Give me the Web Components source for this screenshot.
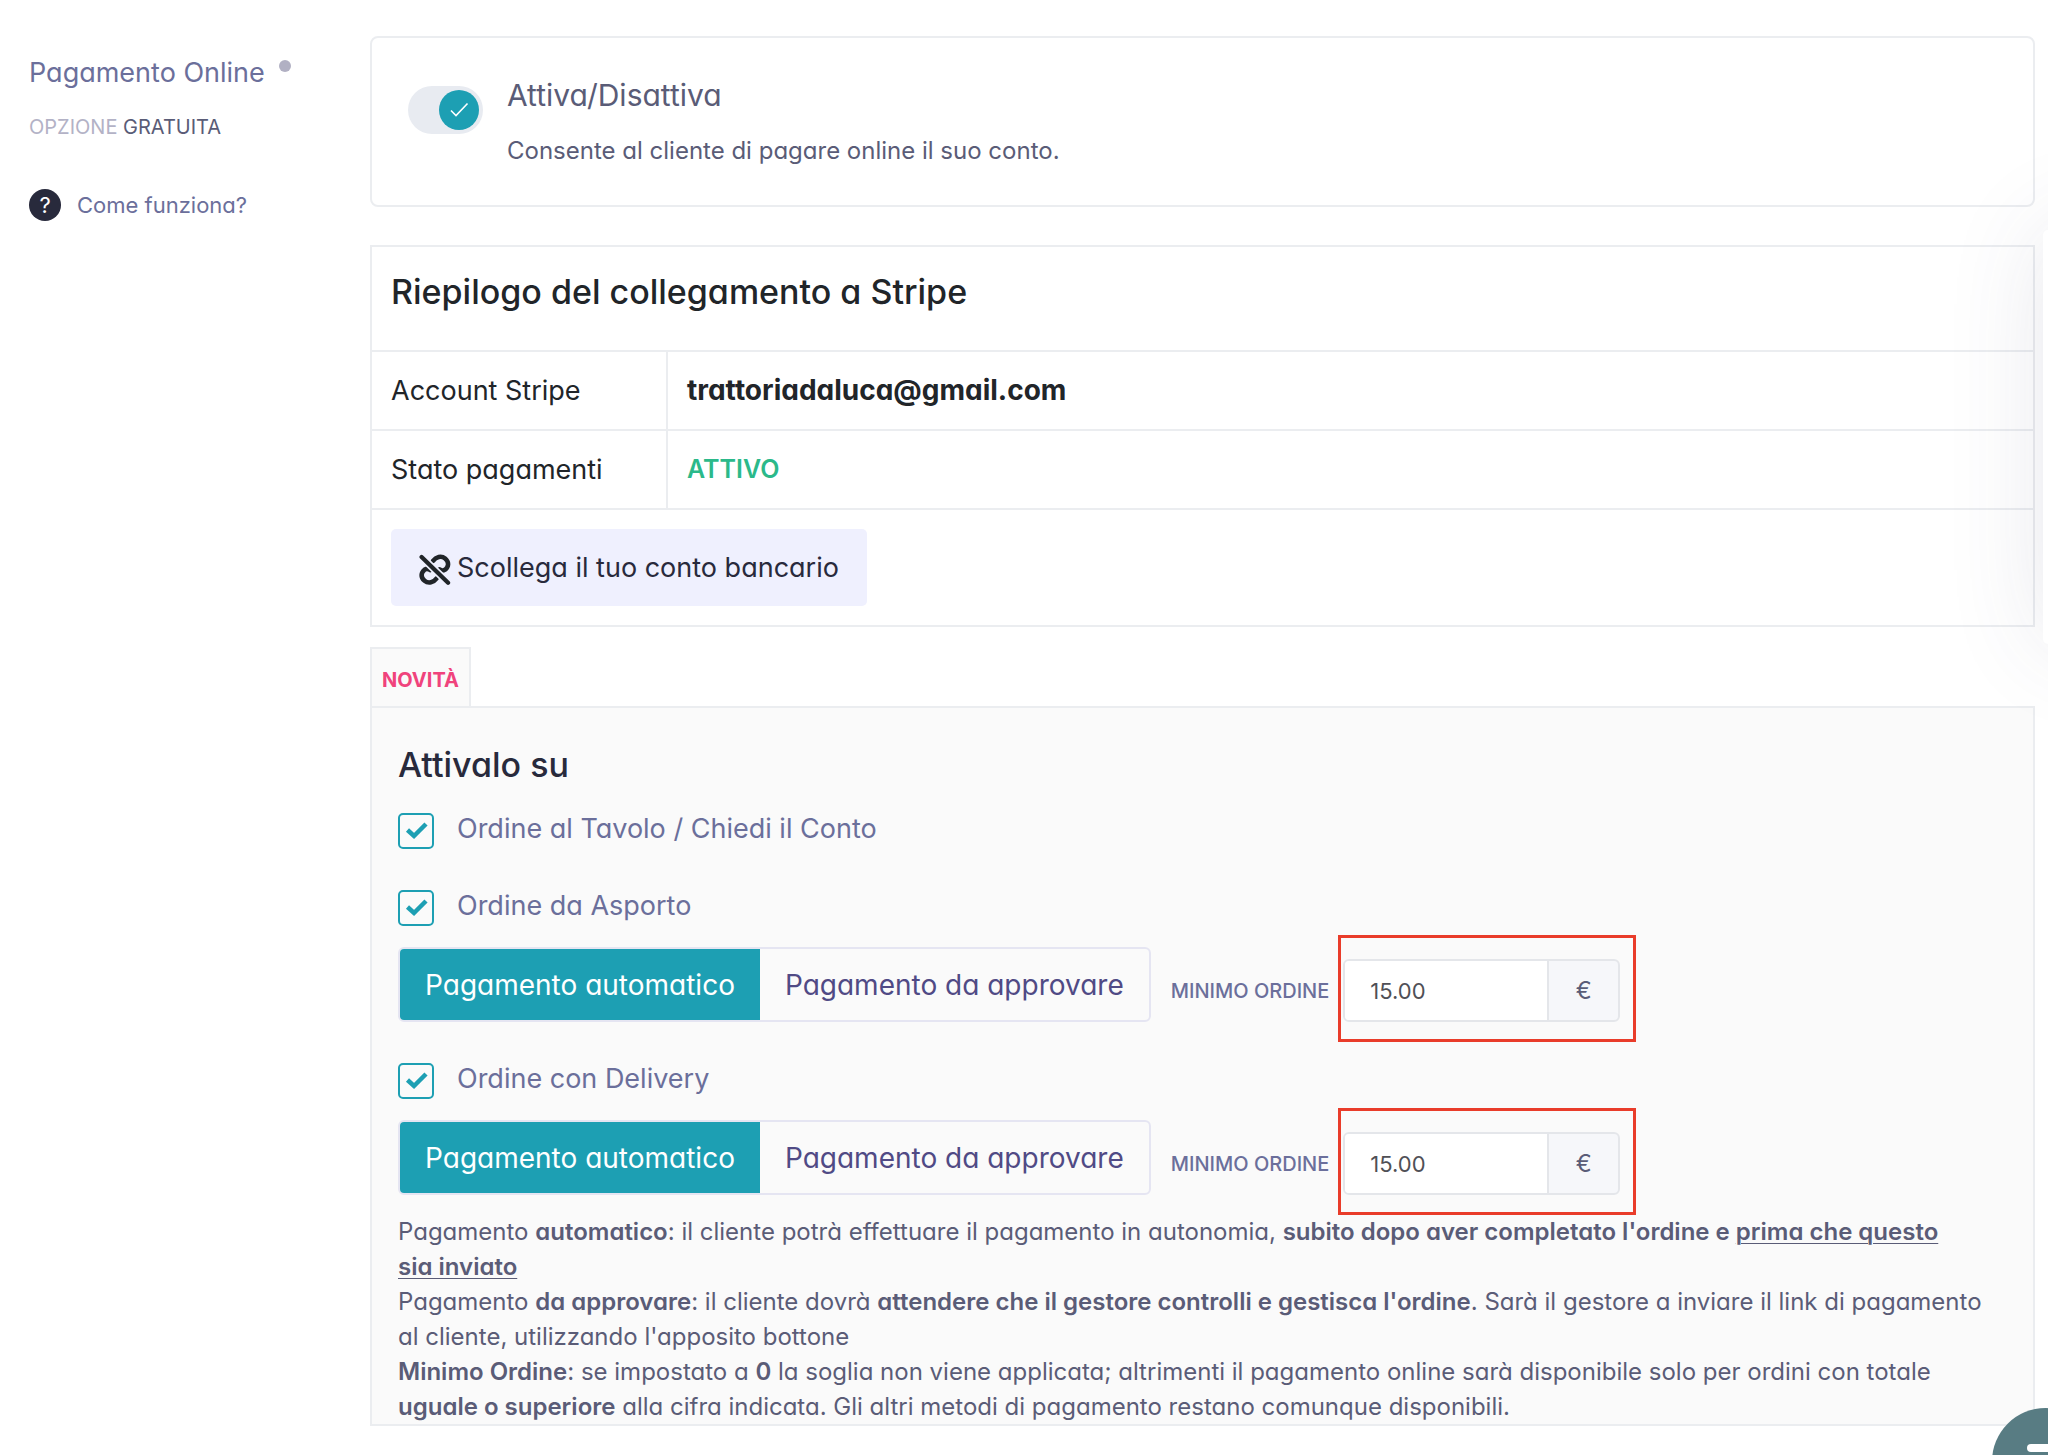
<!DOCTYPE html>
<html lang="it">
<head>
<meta charset="utf-8">
<meta name="viewport" content="width=device-width, initial-scale=1">
<title>Pagamento Online</title>
<style>
    :root {
        --accent: #1d9fb3;
        --line: #ebedf0;
        --muted: #6b6f9b;
        --text: #5a5c77;
        --dark: #282a3c;
        --panel: #fafafa;
    }

    body {
        margin: 0;
        background: #fff;
        color: var(--text);
        font-family: Inter, "Open Sans", sans-serif;
        font-feature-settings: "cv11";
        font-size: 24px;
        overflow-x: hidden;
    }
</style>
</head>
<body>

<settings-page>
    <option-summary slot="side" name="Pagamento Online" price="Gratuita"></option-summary>

    <switch-card caption="Attiva/Disattiva">Consente al cliente di pagare online il suo conto.</switch-card>

    <stripe-account email="trattoriadaluca@gmail.com" status="Attivo"></stripe-account>

    <news-panel tag="Novità" caption="Attivalo su">
        <order-option caption="Ordine al Tavolo / Chiedi il Conto"></order-option>
        <order-option caption="Ordine da Asporto">
            <payment-mode></payment-mode>
            <minimum-order value="15.00"></minimum-order>
        </order-option>
        <order-option caption="Ordine con Delivery">
            <payment-mode></payment-mode>
            <minimum-order value="15.00"></minimum-order>
        </order-option>
        <payment-notes></payment-notes>
    </news-panel>
</settings-page>

<side-drawer></side-drawer>
<chat-button></chat-button>

<script>
class SettingsPage extends HTMLElement {
    constructor() {
        super();
        this.attachShadow({mode: "open"});
    }

    connectedCallback() {
        this.shadowRoot.innerHTML = `
            <style>
            :host {
                display: grid;
                grid-template-columns: 341px minmax(0, 1fr);
                padding: 36px 13px 30px 29px;
            }

            main {
                display: flex;
                flex-direction: column;
            }
            </style>

            <aside><slot name="side"></slot></aside>
            <main><slot></slot></main>
        `;
    }
}


class OptionSummary extends HTMLElement {
    constructor() {
        super();
        this.attachShadow({mode: "open"});
    }

    connectedCallback() {
        this.shadowRoot.innerHTML = `
            <style>
            :host {
                display: block;
                padding-top: 17px;
                color: var(--muted);
            }

            h1 {
                display: flex;
                gap: 14px;
                margin: 0;
                font-size: 27px;
                font-weight: 400;
                line-height: 40px;
            }

            .dot {
                width: 12px;
                height: 12px;
                margin-top: 7px;
                border-radius: 50%;
                background: #b1b0c3;
            }

            p {
                margin: 19px 0 47px;
                color: #b3b2c6;
                font-size: 20px;
                line-height: 30px;
                text-transform: uppercase;
            }

            b {
                color: var(--text);
                font-weight: 400;
            }

            a {
                display: flex;
                align-items: center;
                gap: 16px;
                color: inherit;
                font-size: 22px;
                line-height: 32px;
                text-decoration: none;
            }

            .mark {
                width: 32px;
                border-radius: 50%;
                background: var(--dark);
                color: #fff;
                text-align: center;
            }
            </style>

            <h1>${this.getAttribute("name")}<span class="dot"></span></h1>
            <p>Opzione <b>${this.getAttribute("price")}</b></p>
            <a href="#come-funziona"><span class="mark">?</span>Come funziona?</a>
        `;
    }
}


class SwitchCard extends HTMLElement {
    constructor() {
        super();
        this.attachShadow({mode: "open"});
    }

    connectedCallback() {
        this.shadowRoot.innerHTML = `
            <style>
            :host {
                display: flex;
                align-items: flex-start;
                gap: 24px;
                padding: 36px;
                border: 2px solid var(--line);
                border-radius: 8px;
            }

            .switch {
                display: grid;
                margin-top: 12px;
            }

            input, svg {
                grid-area: 1 / 1;
            }

            input {
                appearance: none;
                width: 75px;
                height: 48px;
                margin: 0;
                border-radius: 24px;
                background: #e8ebf1;
            }

            svg {
                justify-self: end;
                align-self: center;
                margin-right: 4px;
                pointer-events: none;
            }

            input:not(:checked) + svg {
                justify-self: start;
                margin-left: 4px;
            }

            label {
                display: block;
                margin-bottom: 17px;
                font-size: 30px;
                line-height: 42px;
            }

            p {
                margin: 0;
                line-height: 36px;
            }
            </style>

            <span class="switch">
                <input id="active" type="checkbox" role="switch" checked>
                <svg width="40" height="40" viewBox="0 0 40 40" fill="none">
                    <circle cx="20" cy="20" r="20" fill="#1d9fb3"/>
                    <path d="M12 20.500l5 5L28.500 13.500" stroke="#fff" stroke-width="1.600"/>
                </svg>
            </span>
            <div>
                <label for="active">${this.getAttribute("caption")}</label>
                <p><slot></slot></p>
            </div>
        `;
    }
}


class StripeAccount extends HTMLElement {
    constructor() {
        super();
        this.attachShadow({mode: "open"});
    }

    connectedCallback() {
        this.shadowRoot.innerHTML = `
            <style>
            :host {
                display: block;
                margin: 38px 0 20px;
                color: #212529;
            }

            table {
                width: 100%;
                border-collapse: collapse;
                font-size: 27px;
                line-height: 39px;
            }

            th, td {
                padding: 19px;
                border: 2px solid var(--line);
                font-weight: 400;
                text-align: left;
            }

            tbody th {
                width: 256px;
            }

            thead th {
                padding-top: 20px;
                padding-bottom: 33px;
            }

            h2 {
                margin: 0;
                font-size: 34px;
                font-weight: 500;
                line-height: 50px;
            }

            .email {
                font-size: 28px;
                font-weight: 700;
            }

            .status {
                color: #2bb98a;
                font-size: 25px;
                font-weight: 600;
                text-transform: uppercase;
            }

            button {
                display: flex;
                align-items: center;
                gap: 6px;
                height: 77px;
                padding: 0 28px;
                border: 0;
                border-radius: 5px;
                background: #eff0fe;
                color: var(--dark);
                font: inherit;
                font-feature-settings: inherit;
            }

            svg {
                margin-top: 4px;
            }
            </style>

            <table>
                <thead>
                    <tr><th colspan="2"><h2>Riepilogo del collegamento a Stripe</h2></th></tr>
                </thead>
                <tbody>
                    <tr>
                        <th scope="row">Account Stripe</th>
                        <td class="email">${this.getAttribute("email")}</td>
                    </tr>
                    <tr>
                        <th scope="row">Stato pagamenti</th>
                        <td class="status">${this.getAttribute("status")}</td>
                    </tr>
                    <tr>
                        <td colspan="2">
                            <button type="button">
                                <svg width="32" height="32" viewBox="54 43 98 98" fill="none" stroke="#212529" stroke-width="14" stroke-linecap="round">
                                    <path d="M97 64C106 52 122 47 134 57C147 68 145 82 134 91C128 95 122 94 117 90"/>
                                    <path d="M108 118C99 130 83 135 71 125C58 114 60 100 71 91C77 87 83 88 88 92"/>
                                    <path d="M62 52L143 131" stroke="#eff0fe" stroke-width="23"/>
                                    <path d="M62 52L143 131" stroke-width="13"/>
                                </svg>
                                Scollega il tuo conto bancario
                            </button>
                        </td>
                    </tr>
                </tbody>
            </table>
        `;
    }
}


class NewsPanel extends HTMLElement {
    constructor() {
        super();
        this.attachShadow({mode: "open"});
    }

    connectedCallback() {
        this.shadowRoot.innerHTML = `
            <style>
            :host {
                display: block;
            }

            .tag {
                display: block;
                width: fit-content;
                padding: 11px 10px 6px;
                border: 2px solid var(--line);
                border-bottom: 0;
                background: var(--panel);
                color: #f0437c;
                font-size: 20px;
                font-weight: 700;
                line-height: 40px;
                text-transform: uppercase;
            }

            section {
                padding: 33px 14px 0 26px;
                border: 2px solid var(--line);
                background: var(--panel);
            }

            h2 {
                margin: 0 0 24px;
                color: var(--dark);
                font-size: 34px;
                font-weight: 500;
                line-height: 48px;
            }
            </style>

            <strong class="tag">${this.getAttribute("tag")}</strong>
            <section>
                <h2>${this.getAttribute("caption")}</h2>
                <slot></slot>
            </section>
        `;
    }
}


class OrderOption extends HTMLElement {
    constructor() {
        super();
        this.attachShadow({mode: "open"});
    }

    connectedCallback() {
        this.shadowRoot.innerHTML = `
            <style>
            :host {
                display: block;
                margin-bottom: 41px;
            }

            :host(:last-of-type) {
                margin-bottom: 19px;
            }

            .choice {
                display: flex;
                align-items: center;
                gap: 23px;
            }

            .box {
                display: grid;
            }

            input, svg {
                grid-area: 1 / 1;
            }

            input {
                appearance: none;
                width: 36px;
                height: 36px;
                margin: 0;
                border: 2px solid var(--accent);
                border-radius: 5px;
            }

            svg {
                pointer-events: none;
            }

            input:not(:checked) + svg {
                visibility: hidden;
            }

            label {
                padding-bottom: 4px;
                color: var(--muted);
                font-size: 27px;
                line-height: 32px;
            }

            .detail {
                display: flex;
                align-items: flex-end;
                gap: 20px;
            }

            .detail.filled {
                margin-top: 21px;
            }
            </style>

            <div class="choice">
                <span class="box">
                    <input id="enabled" type="checkbox" checked>
                    <svg width="36" height="36" viewBox="0 0 36 36" fill="none">
                        <path d="M9.500 17l6.500 6L28 11" stroke="#1d9fb3" stroke-width="4.500"/>
                    </svg>
                </span>
                <label for="enabled">${this.getAttribute("caption")}</label>
            </div>
            <div class="detail ${this.children.length ? "filled" : ""}"><slot></slot></div>
        `;
    }
}


class PaymentMode extends HTMLElement {
    constructor() {
        super();
        this.attachShadow({mode: "open"});
    }

    connectedCallback() {
        this.shadowRoot.innerHTML = `
            <style>
            :host {
                display: flex;
                border: 2px solid #e5e5f2;
                border-radius: 6px;
                overflow: hidden;
            }

            button {
                height: 71px;
                padding: 0 25px;
                border: 0;
                background: transparent;
                color: #504a85;
                font: inherit;
                font-feature-settings: inherit;
                font-size: 28px;
            }

            button[aria-pressed="true"] {
                background: var(--accent);
                color: #fff;
            }
            </style>

            <button type="button" aria-pressed="true">Pagamento automatico</button>
            <button type="button" aria-pressed="false">Pagamento da approvare</button>
        `;

        const buttons = this.shadowRoot.querySelectorAll("button");
        buttons.forEach(button => button.addEventListener("click", () => {
            buttons.forEach(item => item.setAttribute("aria-pressed", item === button));
        }));
    }
}


class MinimumOrder extends HTMLElement {
    constructor() {
        super();
        this.attachShadow({mode: "open"});
    }

    connectedCallback() {
        this.shadowRoot.innerHTML = `
            <style>
            :host {
                display: flex;
                align-items: center;
                gap: 14px;
            }

            label {
                color: var(--muted);
                font-size: 20px;
                font-weight: 500;
                text-transform: uppercase;
            }

            .group {
                position: relative;
                display: flex;
                height: 59px;
                border: 2px solid #e4e6ea;
                border-radius: 6px;
                background: #f6f7fa;
            }

            /* red frame that calls attention to the amount */
            .group::after {
                content: "";
                position: absolute;
                inset: -26px -18px -22px -7px;
                border: 3px solid #e93c2a;
                pointer-events: none;
            }

            input {
                box-sizing: border-box;
                width: 204px;
                padding: 0 25px;
                border: 0;
                border-right: 2px solid #e4e6ea;
                border-radius: 4px 0 0 4px;
                background: #fff;
                color: #4f5056;
                font: inherit;
                font-size: 22px;
            }

            span {
                width: 69px;
                color: var(--text);
                font-size: 24px;
                line-height: 59px;
                text-align: center;
            }
            </style>

            <label for="amount">Minimo ordine</label>
            <div class="group">
                <input id="amount" type="text" inputmode="decimal" value="${this.getAttribute("value")}">
                <span>€</span>
            </div>
        `;
    }
}


class PaymentNotes extends HTMLElement {
    constructor() {
        super();
        this.attachShadow({mode: "open"});
    }

    connectedCallback() {
        this.shadowRoot.innerHTML = `
            <style>
            :host {
                display: block;
                line-height: 35px;
            }

            p {
                margin: 0;
            }

            b {
                font-weight: 600;
            }

            u {
                text-decoration-thickness: 1px;
                text-underline-offset: 3px;
            }
            </style>

            <p>Pagamento <b>automatico</b>: il cliente potrà effettuare il pagamento in autonomia, <b>subito dopo aver completato l'ordine e <u>prima che questo<br>sia inviato</u></b></p>
            <p>Pagamento <b>da approvare</b>: il cliente dovrà <b>attendere che il gestore controlli e gestisca l'ordine</b>. Sarà il gestore a inviare il link di pagamento<br>al cliente, utilizzando l'apposito bottone</p>
            <p><b>Minimo Ordine</b>: se impostato a <b>0</b> la soglia non viene applicata; altrimenti il pagamento online sarà disponibile solo per ordini con totale<br><b>uguale o superiore</b> alla cifra indicata. Gli altri metodi di pagamento restano comunque disponibili.</p>
        `;
    }
}


// edge of the drawer that waits outside the window
class SideDrawer extends HTMLElement {
    constructor() {
        super();
        this.attachShadow({mode: "open"});
    }

    connectedCallback() {
        this.shadowRoot.innerHTML = `
            <style>
            :host {
                position: fixed;
                top: 230px;
                right: -195px;
                width: 200px;
                height: 414px;
                border-radius: 5px;
                background: #fff;
                box-shadow: 0 0 100px rgba(69, 65, 105, .12);
            }
            </style>
        `;
    }
}


class ChatButton extends HTMLElement {
    constructor() {
        super();
        this.attachShadow({mode: "open"});
    }

    connectedCallback() {
        this.shadowRoot.innerHTML = `
            <style>
            :host {
                position: fixed;
                right: -51px;
                bottom: -60px;
            }

            button {
                display: block;
                padding: 0;
                border: 0;
                border-radius: 50%;
                background: #587c83;
            }

            svg {
                display: block;
            }
            </style>

            <button type="button" aria-label="Chat">
                <svg width="107" height="107" viewBox="0 0 107 107" fill="#fff">
                    <rect x="35" y="36" width="38" height="8" rx="4"/>
                    <rect x="35" y="50" width="38" height="8" rx="4"/>
                    <rect x="35" y="64" width="24" height="8" rx="4"/>
                </svg>
            </button>
        `;
    }
}


customElements.define("settings-page", SettingsPage);
customElements.define("option-summary", OptionSummary);
customElements.define("switch-card", SwitchCard);
customElements.define("stripe-account", StripeAccount);
customElements.define("news-panel", NewsPanel);
customElements.define("order-option", OrderOption);
customElements.define("payment-mode", PaymentMode);
customElements.define("minimum-order", MinimumOrder);
customElements.define("payment-notes", PaymentNotes);
customElements.define("side-drawer", SideDrawer);
customElements.define("chat-button", ChatButton);
</script>
</body>
</html>
